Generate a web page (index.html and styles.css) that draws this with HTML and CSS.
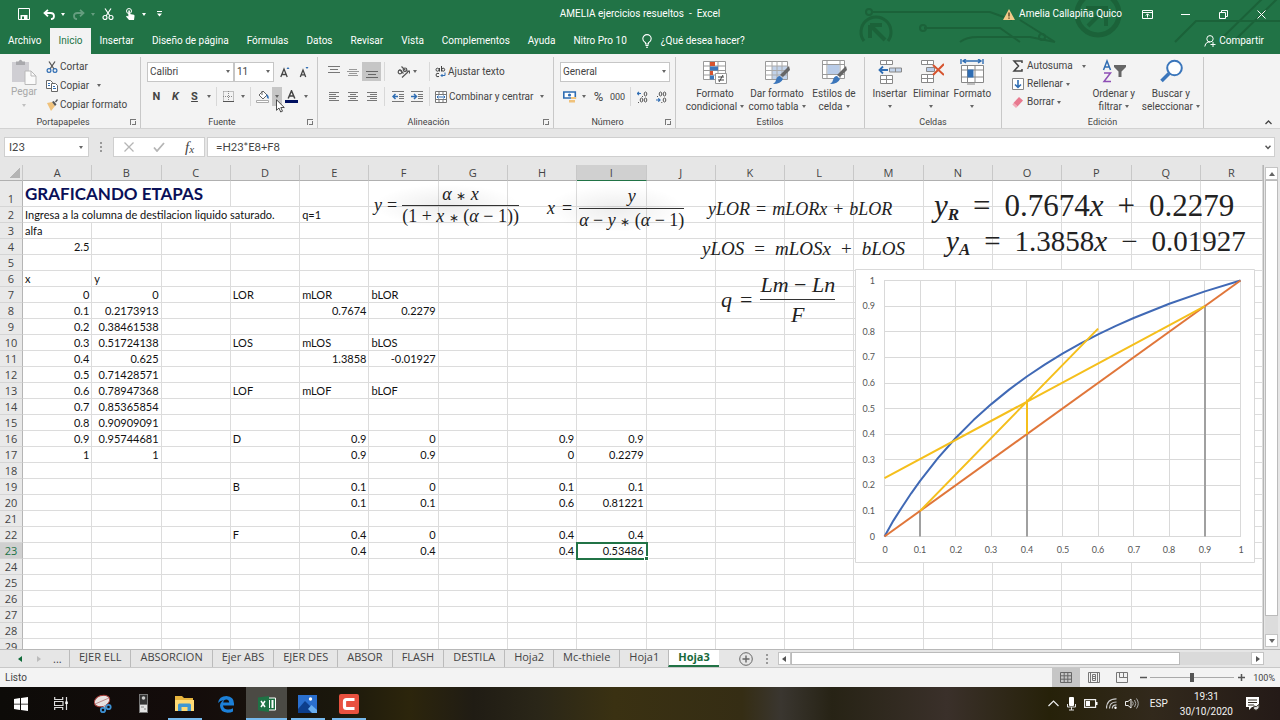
FILE: index.html
```html
<!DOCTYPE html>
<html lang="es">
<head>
<meta charset="utf-8">
<title>AMELIA ejercicios resueltos - Excel</title>
<link rel="stylesheet" href="styles.css">
</head>
<body>
<header class="top">
  <svg class="circuit" width="440" height="54" viewBox="0 0 440 54" aria-hidden="true">
    <g fill="none" stroke="#1b6239" stroke-width="2">
      <path d="M33 12H150L172 20M84 28H160L180 42M120 42Q126 37 138 37H190L215 42M180 20L215 42M335 42L356 21H440M380 40L425 -4M395 40L440 -4"/>
      <circle cx="29" cy="12" r="3"/><circle cx="83" cy="28" r="3"/><circle cx="202" cy="37" r="3"/>
      <path d="M24 41A15 15 0 1 1 48 41" stroke-width="3"/><path d="M30 25H42M30 25V38M31 26L45 40" stroke-width="4"/>
      <circle cx="258" cy="14" r="21" stroke-width="5"/><path d="M246 8H266V26M264 10L248 26" stroke-width="4"/>
    </g>
  </svg>
  <div class="titlebar">
    <div class="qat">
      <button class="q q-save" aria-label="Guardar"><svg width="12" height="12" viewBox="0 0 12 12"><path d="M.5.5h11v11h-11z" fill="none" stroke="#fff"/><path d="M2.500 7h7v5h-7z" fill="#fff"/><path d="M4 8.500h2v2.500H4z" fill="#217346"/><path d="M2.500 1h7v4h-7z" fill="#217346"/></svg></button>
      <button class="q q-undo" aria-label="Deshacer"><svg width="12" height="11" viewBox="0 0 12 11"><path d="M5 .8L1.500 4 5 7.300M2 4h5.500q3.500 0 3.500 3t-3 3.200" fill="none" stroke="#fff" stroke-width="1.800"/></svg><i class="car"></i></button>
      <button class="q q-redo" aria-label="Rehacer"><svg width="12" height="11" viewBox="0 0 12 11"><path d="M7 .8L10.500 4 7 7.300M10 4H4.500Q1 4 1 7t3 3.200" fill="none" stroke="#fff" stroke-width="1.800"/></svg><i class="car"></i></button>
      <button class="q q-cut" aria-label="Cortar"><svg width="12" height="12" viewBox="0 0 12 12"><g fill="none" stroke="#fff" stroke-width="1.200"><path d="M3 .5L8 8M9 .5L4 8"/><circle cx="3" cy="9.500" r="2"/><circle cx="9" cy="9.500" r="2"/></g></svg></button>
      <button class="q q-touch" aria-label="Modo táctil"><svg width="11" height="12" viewBox="0 0 11 12"><circle cx="4" cy="3" r="2.500" fill="none" stroke="#fff"/><path d="M3.300 3a.8.8 0 0 1 1.600 0v3l4 .8q.8.300.6 1.500L9 12H4L1 8.500l1-.8 1.300.8z" fill="#fff"/></svg><i class="car"></i></button>
      <button class="q q-more" aria-label="Personalizar"><svg width="5" height="6" viewBox="0 0 5 6"><path d="M0 .5h5" stroke="#fff"/><path d="M0 2.500h5L2.500 5.500z" fill="#fff"/></svg></button>
    </div>
    <div class="doc">AMELIA ejercicios resueltos &nbsp;-&nbsp; Excel</div>
    <div class="win">
      <svg width="12" height="11" viewBox="0 0 12 11"><path d="M6 0l6 11H0z" fill="#f3c989"/><path d="M6 3.500v4M6 8.500v1.200" stroke="#4a3a1a" stroke-width="1.300"/></svg>
      <span class="user">Amelia Callapiña Quico</span>
      <button class="w w-rib" aria-label="Opciones de cinta"><svg width="11" height="9" viewBox="0 0 11 9"><path d="M.5.500h10v8H.5zM.5 2.500h10M5.500 7.500v-3.500M3.800 5.500l1.700-1.700 1.700 1.700" fill="none" stroke="#fff"/></svg></button>
      <button class="w" aria-label="Minimizar"><svg width="9" height="9" viewBox="0 0 9 9"><path d="M0 4.500h9" stroke="#fff"/></svg></button>
      <button class="w" aria-label="Restaurar"><svg width="9" height="9" viewBox="0 0 9 9"><path d="M.5 2.500h6v6h-6zM2.500 2V.5h6v6H7" fill="none" stroke="#fff"/></svg></button>
      <button class="w" aria-label="Cerrar"><svg width="9" height="9" viewBox="0 0 9 9"><path d="M.5.500l8 8M8.500.500l-8 8" stroke="#fff"/></svg></button>
    </div>
  </div>
  <nav class="tabs">
    <button>Archivo</button><button class="on">Inicio</button><button>Insertar</button><button>Diseño de página</button><button>Fórmulas</button><button>Datos</button><button>Revisar</button><button>Vista</button><button>Complementos</button><button>Ayuda</button><button>Nitro Pro 10</button>
    <button class="tell"><svg width="10" height="14" viewBox="0 0 10 14"><path d="M3.500 10V8.700Q.8 7.300.8 4.800a4.200 4.200 0 0 1 8.400 0Q9.200 7.300 6.500 8.700V10zM3.500 11.500h3M4 13.200h2" fill="none" stroke="#fff" stroke-width="1.100"/></svg>¿Qué desea hacer?</button>
    <button class="share"><svg width="12" height="12" viewBox="0 0 12 12"><g fill="none" stroke="#fff"><circle cx="6" cy="3.800" r="3.200"/><path d="M.8 11.500Q1 8.200 4 7h2M9 7v5M6.500 9.500h5"/></g></svg>Compartir</button>
  </nav>
</header>

<section class="ribbon">
  <div class="group g-clip">
    <div class="body">
      <button class="paste"><svg width="26" height="26" viewBox="0 0 26 26"><path d="M1 3h17v20H1z" fill="#cfced3"/><path d="M5 6V2.500h2.500Q9.500-1 11.500 2.500H14V6z" fill="#a9a9ad"/><path d="M14 12h6l5 5v8.500H14z" fill="#fafafa" stroke="#b9b9b9"/><path d="M20 12v5h5" fill="none" stroke="#b9b9b9"/></svg><span>Pegar</span><i class="car"></i></button>
      <div class="stack">
        <button><svg width="12" height="12" viewBox="0 0 12 12"><path d="M3 .5L8 8M9 .5L4 8" stroke="#555" stroke-width="1.300"/><g fill="none" stroke="#2f6db3" stroke-width="1.200"><circle cx="3" cy="9.500" r="1.900"/><circle cx="9" cy="9.500" r="1.900"/></g></svg>Cortar</button>
        <button><svg width="12" height="12" viewBox="0 0 12 12"><g fill="#fff" stroke="#666"><path d="M.5.500h4l2 2v6h-6z"/><path d="M5.500 3.500h4l2 2v6h-6z"/></g><path d="M2 3.500h2M2 5.500h2M7 6.500h2M7 8.500h3" stroke="#2f6db3"/></svg>Copiar<i class="car far"></i></button>
        <button><svg width="12" height="12" viewBox="0 0 12 12"><path d="M1 4l5-1 3 4-4 5z" fill="#f0c27b"/><path d="M6 3l3 4 1.500-1.500L7.800 2zM9 2.500L11 0l1 1-2 2.500z" fill="#555"/></svg>Copiar formato</button>
      </div>
    </div>
    <footer class="has-launch">Portapapeles<i class="launch"></i></footer>
  </div>

  <div class="group g-font">
    <div class="body rows">
      <div class="row">
        <span class="sel s-font"><select aria-label="Fuente"><option>Calibri</option></select><i class="car"></i></span>
        <span class="sel s-size"><select aria-label="Tamaño"><option>11</option></select><i class="car"></i></span>
        <button class="ic" aria-label="Aumentar fuente"><svg width="10" height="12" viewBox="0 0 10 12"><path d="M.8 11L4 3l3.200 8M2 8.500h4" fill="none" stroke="#444" stroke-width="1.300"/><path d="M6.500 3l1.500-2 1.500 2z" fill="#2f6db3"/></svg></button>
        <button class="ic" aria-label="Disminuir fuente"><svg width="10" height="12" viewBox="0 0 10 12"><path d="M1.300 11L4 4l2.700 7M2.200 8.800h3.600" fill="none" stroke="#444" stroke-width="1.300"/><path d="M6.500 1l1.500 2 1.500-2z" fill="#2f6db3"/></svg></button>
      </div>
      <div class="row">
        <button class="ic fmt"><b>N</b></button><button class="ic fmt"><b><em>K</em></b></button><button class="ic fmt"><b><u>S</u></b></button><button class="cb" aria-label="Más subrayado"><i class="car"></i></button>
        <i class="sep"></i>
        <button class="ic" aria-label="Bordes"><svg width="11" height="11" viewBox="0 0 11 11"><path d="M.5.500h10v10M.5.500v10M5.500 0v10M0 5.500h10" fill="none" stroke="#8a8a8a" stroke-dasharray="1 1"/><path d="M0 10.500h11" stroke="#555"/></svg></button><button class="cb" aria-label="Más bordes"><i class="car"></i></button>
        <i class="sep"></i>
        <button class="ic" aria-label="Color de relleno"><svg width="14" height="13" viewBox="0 0 14 13"><path d="M3 5l4-4 4 4-4 4z" fill="#fff" stroke="#666"/><path d="M6 5V1" stroke="#666"/><path d="M10.500 4q3 2 2 5-1.500-.5-2-3z" fill="#2f6db3"/><path d="M.5 10.500h12v2H.5z" fill="#fff" stroke="#aaa"/></svg></button><button class="cb hot" aria-label="Más rellenos"><i class="car"></i></button>
        <button class="ic" aria-label="Color de fuente"><svg width="13" height="13" viewBox="0 0 13 13"><path d="M3.200 8.500L6.500.800l3.300 7.700M4.300 6h4.400" fill="none" stroke="#444" stroke-width="1.500"/><path d="M0 10h13v3H0z" fill="#001060"/></svg></button><button class="cb" aria-label="Más colores"><i class="car"></i></button>
      </div>
    </div>
    <footer class="has-launch">Fuente<i class="launch"></i></footer>
  </div>

  <div class="group g-align">
    <div class="body rows">
      <div class="row">
        <button class="ic" aria-label="Alinear arriba"><svg width="12" height="12" viewBox="0 0 12 12"><path d="M0 .5h12M2 3.500h8M0 6.500h12" stroke="#777"/></svg></button>
        <button class="ic" aria-label="Alinear al medio"><svg width="12" height="12" viewBox="0 0 12 12"><path d="M2 3.500h8M0 5.500h12M2 7.500h8M1 9.500h10" stroke="#999"/></svg></button>
        <button class="ic hot" aria-label="Alinear abajo"><svg width="12" height="12" viewBox="0 0 12 12"><path d="M0 5.500h12M2 8.500h8M0 11.500h12" stroke="#666"/></svg></button>
        <i class="sep"></i>
        <button class="ic wide" aria-label="Orientación"><svg width="13" height="12" viewBox="0 0 13 12"><g fill="none" stroke="#555" stroke-width="1.200"><circle cx="3" cy="6" r="1.800"/><path d="M2.500 3.500l4 4M4.500.500l4 4"/><circle cx="8" cy="3.800" r="1.800"/><path d="M5 11.500L12 5M12.500 7.500V5H10"/></g></svg><i class="car"></i></button>
        <i class="sep"></i>
        <button class="tx"><svg width="11" height="12" viewBox="0 0 11 12"><g fill="none" stroke="#444"><circle cx="2.500" cy="3.700" r="1.500"/><path d="M4.500 2v3.500M6.500 0v5.500M4 7.500Q1 6.500 1 9t3 1.500"/><circle cx="8.200" cy="3.700" r="1.500"/></g><path d="M10 6.500v3H6M7.500 8L6 9.500 7.500 11" fill="none" stroke="#2f6db3"/></svg>Ajustar texto</button>
      </div>
      <div class="row">
        <button class="ic" aria-label="Alinear a la izquierda"><svg width="10" height="9" viewBox="0 0 10 9"><path d="M0 .5h10M0 2.500h7M0 4.500h10M0 6.500h7M0 8.500h10" stroke="#777"/></svg></button>
        <button class="ic" aria-label="Centrar"><svg width="10" height="9" viewBox="0 0 10 9"><path d="M0 .5h10M2 2.500h6M0 4.500h10M2 6.500h6M0 8.500h10" stroke="#777"/></svg></button>
        <button class="ic" aria-label="Alinear a la derecha"><svg width="10" height="9" viewBox="0 0 10 9"><path d="M0 .5h10M3 2.500h7M0 4.500h10M3 6.500h7M0 8.500h10" stroke="#777"/></svg></button>
        <i class="sep"></i>
        <button class="ic" aria-label="Disminuir sangría"><svg width="12" height="11" viewBox="0 0 12 11"><path d="M0 .5h12M7 3.500h5M7 5.500h5M7 7.500h5M0 10.500h12" stroke="#777"/><path d="M6 5.500H1M3.500 3L1 5.500 3.500 8" fill="none" stroke="#2f6db3" stroke-width="1.500"/></svg></button>
        <button class="ic" aria-label="Aumentar sangría"><svg width="12" height="11" viewBox="0 0 12 11"><path d="M0 .5h12M7 3.500h5M7 5.500h5M7 7.500h5M0 10.500h12" stroke="#777"/><path d="M0 5.500h5M3 3l2.500 2.500L3 8" fill="none" stroke="#2f6db3" stroke-width="1.500"/></svg></button>
        <i class="sep"></i>
        <button class="tx"><svg width="12" height="12" viewBox="0 0 12 12"><path d="M.5.500h11v11H.5zM0 3.500h12M0 8.500h12M4 0v3M8 0v3M4 9v3M8 9v3" fill="#fff" stroke="#777"/><path d="M2 6h8M3.500 4.500L2 6l1.500 1.500M8.500 4.500L10 6 8.500 7.500" fill="none" stroke="#2f6db3"/></svg>Combinar y centrar<i class="car far"></i></button>
      </div>
    </div>
    <footer class="has-launch">Alineación<i class="launch"></i></footer>
  </div>

  <div class="group g-num">
    <div class="body rows">
      <div class="row"><span class="sel s-num"><select aria-label="Formato de número"><option>General</option></select><i class="car"></i></span></div>
      <div class="row">
        <button class="ic" aria-label="Moneda"><svg width="14" height="12" viewBox="0 0 14 12"><path d="M.8 1h11.500v6H.8z" fill="#fff" stroke="#2f6db3" stroke-width="1.600"/><circle cx="6.500" cy="4" r="1.600" fill="#2f6db3"/><path d="M8 6h5v2H8zM6 9h6v2.500H6z" fill="#f0c27b"/></svg></button><button class="cb" aria-label="Más monedas"><i class="car"></i></button>
        <button class="ic pct">%</button><button class="ic mil">000</button>
        <i class="sep"></i>
        <button class="ic dec" aria-label="Aumentar decimales"><svg width="11" height="12" viewBox="0 0 11 12"><path d="M0 2.500h4M2 .8L.3 2.500 2 4.200" fill="none" stroke="#2f6db3" stroke-width="1.200"/><g fill="none" stroke="#555"><ellipse cx="8.500" cy="3" rx="1.300" ry="2"/><ellipse cx="4.500" cy="9" rx="1.300" ry="2"/><ellipse cx="8.500" cy="9" rx="1.300" ry="2"/></g><path d="M5.500 5v1M1.500 11v1" stroke="#555"/></svg></button>
        <button class="ic dec" aria-label="Disminuir decimales"><svg width="11" height="12" viewBox="0 0 11 12"><path d="M0 9h4M2.300 7.300L4 9l-1.700 1.700" fill="none" stroke="#2f6db3" stroke-width="1.200"/><g fill="none" stroke="#555"><ellipse cx="4.500" cy="3" rx="1.300" ry="2"/><ellipse cx="8.500" cy="3" rx="1.300" ry="2"/><ellipse cx="8.500" cy="9" rx="1.300" ry="2"/></g><path d="M1.500 5v1M5.800 11v1" stroke="#555"/></svg></button>
      </div>
    </div>
    <footer class="has-launch">Número<i class="launch"></i></footer>
  </div>

  <div class="group g-style">
    <div class="body bigs">
      <button class="big"><svg width="26" height="26" viewBox="0 0 26 26"><path d="M1.500 2.500h22v18h-22zM1.500 7h22M1.500 11.500h22M1.500 16h22M8 2.500v18M16 2.500v18" fill="#fff" stroke="#999"/><path d="M8 3h5v4H8zM8 12h3v4H8z" fill="#d6532e"/><path d="M8 7.500h8v4H8zM8 16.500h4v4H8z" fill="#3b76bb"/><path d="M13.500 14.500h11v10h-11z" fill="#fff" stroke="#999"/><path d="M16 18h6M16 21h6M21 16l-4 7" stroke="#444"/></svg>Formato<span>condicional<i class="car"></i></span></button>
      <button class="big"><svg width="26" height="26" viewBox="0 0 26 26"><path d="M1.500 2.500h22v18h-22z" fill="#fff" stroke="#999"/><path d="M8 7h15v13H8z" fill="#c2d3ea"/><path d="M1.500 7h22M1.500 11.500h22M1.500 16h22M8 2.500v18M13 2.500v18M18 2.500v18" stroke="#aaa"/><path d="M25 7l1 4-7 7-3-2z" fill="#666"/><path d="M16 17l3 3q-2 5-10 5 3-2 3-4 1-4 4-4z" fill="#3b76bb"/></svg>Dar formato<span>como tabla<i class="car"></i></span></button>
      <button class="big"><svg width="26" height="26" viewBox="0 0 26 26"><path d="M1.500 1.500h22v18h-22zM1.500 5.500h22M1.500 15.500h22M6 1.500v18M19 1.500v18" fill="#fff" stroke="#999"/><path d="M6.500 6h12v9h-12z" fill="#b9cce8"/><path d="M25 7l1 4-7 7-3-2z" fill="#666"/><path d="M16 17l3 3q-2 5-10 5 3-2 3-4 1-4 4-4z" fill="#3b76bb"/></svg>Estilos de<span>celda<i class="car"></i></span></button>
    </div>
    <footer>Estilos</footer>
  </div>

  <div class="group g-cells">
    <div class="body bigs">
      <button class="big"><svg width="26" height="26" viewBox="0 0 26 26"><path d="M3.500 1.500h12v4h-12zM9.500 1.500v4M3.500 16.500h12v8h-12zM9.500 16.500v8M3.500 20.500h12" fill="#fff" stroke="#888"/><path d="M12.500 9h12v4h-12zM18.500 9v4" fill="#c2d3ea" stroke="#888"/><path d="M11 11H2.500M6 7.500L2.500 11 6 14.500" fill="none" stroke="#2f6db3" stroke-width="1.800"/></svg>Insertar<span><i class="car"></i></span></button>
      <button class="big"><svg width="26" height="26" viewBox="0 0 26 26"><path d="M3.500 1.500h12v4h-12zM9.500 1.500v4M3.500 15.500h12v8h-12zM9.500 15.500v8M3.500 19.500h12" fill="#fff" stroke="#888"/><path d="M8.500 8.500h8v4h-8z" fill="#b9cce8" stroke="#888"/><path d="M15 6l11 10M26 5L15 16" stroke="#d6532e" stroke-width="2"/></svg>Eliminar<span><i class="car"></i></span></button>
      <button class="big"><svg width="26" height="26" viewBox="0 0 26 26"><path d="M4 2h18M7 0L4 2l3 2M19 0l3 2-3 2M2 0v5M24 0v5" fill="none" stroke="#2f6db3" stroke-width="1.400"/><path d="M2.500 6.500h22v17h-22zM2.500 11h22M2.500 18h22M8.500 6.500v17M16 6.500v17" fill="#fff" stroke="#888"/><path d="M8.500 10.500h6v8h-6z" fill="#2f6db3"/><path d="M8 25h8" stroke="#888"/></svg>Formato<span><i class="car"></i></span></button>
    </div>
    <footer>Celdas</footer>
  </div>

  <div class="group g-edit">
    <div class="body bigs">
      <div class="stack">
        <button><svg width="12" height="12" viewBox="0 0 12 12"><path d="M10 3V1H2l4.500 5L2 11h8V9" fill="none" stroke="#444" stroke-width="1.500"/></svg>Autosuma<i class="car far"></i></button>
        <button><svg width="12" height="12" viewBox="0 0 12 12"><path d="M.5.500h11v11H.5z" fill="#fff" stroke="#888"/><path d="M6 2v7M3 6.500L6 9.300l3-2.800" fill="none" stroke="#2f6db3" stroke-width="1.600"/></svg>Rellenar<i class="car"></i></button>
        <button><svg width="12" height="12" viewBox="0 0 12 12"><path d="M7 1l4 3.500-5.500 6L1.500 7z" fill="#e8798f"/><path d="M1.500 7l4 3.500L4 12 .3 8.500z" fill="#f3aab8"/></svg>Borrar<i class="car"></i></button>
      </div>
      <button class="big"><svg width="26" height="26" viewBox="0 0 26 26"><path d="M2.500 11L6 2l3.500 9M3.700 8h4.600" fill="none" stroke="#2f6db3" stroke-width="1.500"/><path d="M3 14h6.500L3 22.500h7" fill="none" stroke="#8e4fb5" stroke-width="1.500"/><path d="M13 6h12v2l-4.500 4.500V18h-3v-5.500L13 8z" fill="#666"/></svg>Ordenar y<span>filtrar<i class="car"></i></span></button>
      <button class="big"><svg width="26" height="26" viewBox="0 0 26 26"><circle cx="16.500" cy="9" r="7.300" fill="#fff" stroke="#3b76bb" stroke-width="2"/><path d="M11 14.500L3.500 22" stroke="#3b76bb" stroke-width="3.500"/></svg>Buscar y<span>seleccionar<i class="car"></i></span></button>
    </div>
    <footer>Edición</footer>
  </div>
  <button class="fold" aria-label="Contraer cinta"><svg width="7" height="5" viewBox="0 0 7 5"><path d="M.5 4l3-3 3 3" fill="none" stroke="#444" stroke-width="1.300"/></svg></button>
</section>

<section class="fbar">
  <div class="namebox"><input aria-label="Cuadro de nombres" value="I23"><i class="car"></i></div>
  <i class="dots"></i>
  <div class="fbtns">
    <button aria-label="Cancelar"><svg width="10" height="10" viewBox="0 0 10 10"><path d="M.5.500l9 9M9.500.500l-9 9" stroke="#b5b5b5" stroke-width="1.300"/></svg></button>
    <button aria-label="Introducir"><svg width="12" height="10" viewBox="0 0 12 10"><path d="M1 5.500L4 9l7-8" fill="none" stroke="#b5b5b5" stroke-width="1.800"/></svg></button>
    <button class="fx">f<small>x</small></button>
  </div>
  <div class="finput"><input aria-label="Barra de fórmulas" value="=H23*E8+F8"><svg width="6" height="5" viewBox="0 0 6 5"><path d="M.5.800L3 3.500 5.500.800" fill="none" stroke="#555" stroke-width="1.500"/></svg></div>
</section>

<main class="sheet">
  <div class="canvas">
    <table class="grid">
      <colgroup><col class="c-head"><col span="17"><col class="c-last"></colgroup>
      <thead><tr><th class="corner"><th>A<th>B<th>C<th>D<th>E<th>F<th>G<th>H<th class="act">I<th>J<th>K<th>L<th>M<th>N<th>O<th>P<th>Q<th>R</thead>
      <tbody>
      <tr class="first"><th>1<td colspan="3" class="big-title">GRAFICANDO ETAPAS<td><td><td><td><td><td><td><td><td><td><td><td><td><td><td>
      <tr><th>2<td colspan="4">Ingresa a la columna de destilacion liquido saturado.<td>q=1<td><td><td><td><td><td><td><td><td><td><td><td><td>
      <tr><th>3<td>alfa<td><td><td><td><td><td><td><td><td><td><td><td><td><td><td><td><td>
      <tr><th>4<td class="n">2.5<td><td><td><td><td><td><td><td><td><td><td><td><td><td><td><td><td>
      <tr><th>5<td><td><td><td><td><td><td><td><td><td><td><td><td><td><td><td><td><td>
      <tr><th>6<td>x<td>y<td><td><td><td><td><td><td><td><td><td><td><td><td><td><td><td>
      <tr><th>7<td class="n">0<td class="n">0<td><td>LOR<td>mLOR<td>bLOR<td><td><td><td><td><td><td><td><td><td><td><td>
      <tr><th>8<td class="n">0.1<td class="n">0.2173913<td><td><td class="n">0.7674<td class="n">0.2279<td><td><td><td><td><td><td><td><td><td><td><td>
      <tr><th>9<td class="n">0.2<td class="n">0.38461538<td><td><td><td><td><td><td><td><td><td><td><td><td><td><td><td>
      <tr><th>10<td class="n">0.3<td class="n">0.51724138<td><td>LOS<td>mLOS<td>bLOS<td><td><td><td><td><td><td><td><td><td><td><td>
      <tr><th>11<td class="n">0.4<td class="n">0.625<td><td><td class="n">1.3858<td class="n">-0.01927<td><td><td><td><td><td><td><td><td><td><td><td>
      <tr><th>12<td class="n">0.5<td class="n">0.71428571<td><td><td><td><td><td><td><td><td><td><td><td><td><td><td><td>
      <tr><th>13<td class="n">0.6<td class="n">0.78947368<td><td>LOF<td>mLOF<td>bLOF<td><td><td><td><td><td><td><td><td><td><td><td>
      <tr><th>14<td class="n">0.7<td class="n">0.85365854<td><td><td><td><td><td><td><td><td><td><td><td><td><td><td><td>
      <tr><th>15<td class="n">0.8<td class="n">0.90909091<td><td><td><td><td><td><td><td><td><td><td><td><td><td><td><td>
      <tr><th>16<td class="n">0.9<td class="n">0.95744681<td><td>D<td class="n">0.9<td class="n">0<td><td class="n">0.9<td class="n">0.9<td><td><td><td><td><td><td><td><td>
      <tr><th>17<td class="n">1<td class="n">1<td><td><td class="n">0.9<td class="n">0.9<td><td class="n">0<td class="n">0.2279<td><td><td><td><td><td><td><td><td>
      <tr><th>18<td><td><td><td><td><td><td><td><td><td><td><td><td><td><td><td><td><td>
      <tr><th>19<td><td><td><td>B<td class="n">0.1<td class="n">0<td><td class="n">0.1<td class="n">0.1<td><td><td><td><td><td><td><td><td>
      <tr><th>20<td><td><td><td><td class="n">0.1<td class="n">0.1<td><td class="n">0.6<td class="n">0.81221<td><td><td><td><td><td><td><td><td>
      <tr><th>21<td><td><td><td><td><td><td><td><td><td><td><td><td><td><td><td><td><td>
      <tr><th>22<td><td><td><td>F<td class="n">0.4<td class="n">0<td><td class="n">0.4<td class="n">0.4<td><td><td><td><td><td><td><td><td>
      <tr><th class="act">23<td><td><td><td><td class="n">0.4<td class="n">0.4<td><td class="n">0.4<td class="n cur">0.53486<td><td><td><td><td><td><td><td><td>
      <tr><th>24<td><td><td><td><td><td><td><td><td><td><td><td><td><td><td><td><td><td>
      <tr><th>25<td><td><td><td><td><td><td><td><td><td><td><td><td><td><td><td><td><td>
      <tr><th>26<td><td><td><td><td><td><td><td><td><td><td><td><td><td><td><td><td><td>
      <tr><th>27<td><td><td><td><td><td><td><td><td><td><td><td><td><td><td><td><td><td>
      <tr><th>28<td><td><td><td><td><td><td><td><td><td><td><td><td><td><td><td><td><td>
      <tr><th>29<td><td><td><td><td><td><td><td><td><td><td><td><td><td><td><td><td><td>
      </tbody>
    </table>

    <div class="eq eq-y"><i>y</i><span>=</span><span class="frac"><span><i>α</i> <small>∗</small> <i>x</i></span><span>(1 + <i>x</i> <small>∗</small> (<i>α</i> − 1))</span></span></div>
    <div class="eq eq-x"><i>x</i><span>=</span><span class="frac"><span><i>y</i></span><span><i>α</i> − <i>y</i> <small>∗</small> (<i>α</i> − 1)</span></span></div>
    <div class="eq eq-lor"><i>yLOR</i><span>=</span><i>mLORx</i><span>+</span><i>bLOR</i></div>
    <div class="eq eq-los"><i>yLOS</i><span>=</span><i>mLOSx</i><span>+</span><i>bLOS</i></div>
    <div class="eq eq-q"><i>q</i><span>=</span><span class="frac"><span><i>Lm</i> − <i>Ln</i></span><span><i>F</i></span></span></div>
    <div class="eq eq-r"><span><i>y</i><sub>R</sub></span><span>=</span><span>0.7674<i>x</i></span><span>+</span><span>0.2279</span></div>
    <div class="eq eq-a"><span><i>y</i><sub>A</sub></span><span>=</span><span>1.3858<i>x</i></span><span>−</span><span>0.01927</span></div>

    <svg class="chart" width="400" height="294" viewBox="0 0 400 294" role="img" aria-label="Gráfico de etapas">
      <path d="M.5.500h399v293H.5z" fill="#fff" stroke="#d9d9d9"/>
      <path d="M29.500 11.500H385.500M29.500 37.500H385.500M29.500 62.500H385.500M29.500 88.500H385.500M29.500 114.500H385.500M29.500 139.500H385.500M29.500 165.500H385.500M29.500 190.500H385.500M29.500 216.500H385.500M29.500 241.500H385.500M29.500 267.500H385.500M29.500 11V268M65.500 11V268M100.500 11V268M136.500 11V268M171.500 11V268M207.500 11V268M243.500 11V268M278.500 11V268M314.500 11V268M349.500 11V268M385.500 11V268" stroke="#d9d9d9" fill="none"/>
      <g fill="none" stroke-width="2" stroke-linejoin="round">
        <path stroke="#a0a0a0" d="M350 37.100V267.500M65 241.900V267.500M172 165.100V267.500"/>
        <path stroke="#4069b5" d="M29.500 267.500L38.400 251.600 47.300 237.700 56.200 224.300 65.100 211.800 82.900 189.100 100.700 169 118.500 151.100 136.300 135.100 154.100 120.600 171.900 107.500 189.700 95.600 207.500 84.600 225.300 74.600 243.100 65.400 260.900 56.900 278.700 49 314.300 34.800 349.900 22.400 385.500 11.500"/>
        <path stroke="#e0763a" d="M29.500 267.500L385.500 11.500"/>
        <path stroke="#f5bf1c" d="M29.500 209.200L349.900 37.100M65.100 241.900L243.100 59.600M172 165.100V130.600"/>
      </g>
      <g class="lab end"><text x="20" y="15">1</text><text x="20" y="40">0.9</text><text x="20" y="66">0.8</text><text x="20" y="91">0.7</text><text x="20" y="117">0.6</text><text x="20" y="143">0.5</text><text x="20" y="168">0.4</text><text x="20" y="194">0.3</text><text x="20" y="219">0.2</text><text x="20" y="245">0.1</text><text x="20" y="271">0</text></g>
      <g class="lab mid"><text x="30" y="284">0</text><text x="65" y="284">0.1</text><text x="101" y="284">0.2</text><text x="136" y="284">0.3</text><text x="172" y="284">0.4</text><text x="208" y="284">0.5</text><text x="243" y="284">0.6</text><text x="279" y="284">0.7</text><text x="314" y="284">0.8</text><text x="350" y="284">0.9</text><text x="386" y="284">1</text></g>
    </svg>
  </div>
  <div class="vscroll"><button class="sb" aria-label="Arriba"><i class="tri up"></i></button><div class="vthumb"></div><div class="vrest"></div><button class="sb" aria-label="Abajo"><i class="tri down"></i></button></div>
</main>

<section class="sheets">
  <div class="snav"><i class="tri left go"></i><i class="tri right off"></i><span>...</span></div>
  <nav><button>EJER ELL</button><button>ABSORCION</button><button>Ejer ABS</button><button>EJER DES</button><button>ABSOR</button><button>FLASH</button><button>DESTILA</button><button>Hoja2</button><button>Mc-thiele</button><button>Hoja1</button><button class="on">Hoja3</button></nav>
  <button class="add" aria-label="Hoja nueva"><svg width="14" height="14" viewBox="0 0 14 14"><g fill="none" stroke="#666"><circle cx="7" cy="7" r="6.300"/><path d="M7 3.500v7M3.500 7h7" stroke-width="1.400"/></g></svg></button>
  <i class="dots"></i>
  <div class="hscroll"><button class="sb" aria-label="Izquierda"><i class="tri left"></i></button><div class="hthumb"></div><div class="hrest"></div><button class="sb" aria-label="Derecha"><i class="tri right"></i></button></div>
</section>

<section class="status">
  <span>Listo</span>
  <div class="views">
    <button class="hot" aria-label="Normal"><svg width="12" height="11" viewBox="0 0 12 11"><path d="M.5.500h11v10H.5zM0 3.800h12M0 7.200h12M4.200 0v11M7.800 0v11" fill="none" stroke="#666"/></svg></button>
    <button aria-label="Diseño de página"><svg width="12" height="11" viewBox="0 0 12 11"><path d="M.5.500h11v10H.5zM2.500.500v10M9.500.500v10M4.500 2.500h3v6h-3zM4 4.500h4M4 6.500h4" fill="none" stroke="#777"/></svg></button>
    <button aria-label="Vista previa de salto"><svg width="12" height="11" viewBox="0 0 12 11"><path d="M.5.500h11v10H.5zM3.500.500v5h8M7.500.500v5" fill="none" stroke="#777"/></svg></button>
  </div>
  <button class="z" aria-label="Alejar"><svg width="7" height="7" viewBox="0 0 7 7"><path d="M0 3.500h7" stroke="#555" stroke-width="1.500"/></svg></button>
  <input type="range" aria-label="Zoom" min="0" max="200" value="100">
  <button class="z" aria-label="Acercar"><svg width="7" height="7" viewBox="0 0 7 7"><path d="M0 3.500h7M3.500 0v7" stroke="#555" stroke-width="1.500"/></svg></button>
  <span class="pc">100%</span>
</section>

<footer class="taskbar">
  <button class="app" aria-label="Inicio"><svg width="14" height="14" viewBox="0 0 14 14"><path d="M0 2l6-.9v5.600H0zM7 1l7-1v6.700H7zM0 7.500h6V13l-6-.9zM7 7.500h7V14l-7-1z" fill="#fff"/></svg></button>
  <button class="app" aria-label="Vista de tareas"><svg width="15" height="13" viewBox="0 0 15 13"><path d="M.7 0v2.500h8V0M.7 13v-2.500h8V13M.5 4.500h8.500v4H.5zM12.500 0v13" fill="none" stroke="#ddd" stroke-width="1.200"/><path d="M11.300 4.500h2.500v2.500h-2.500z" fill="#fff"/></svg></button>
  <button class="app" aria-label="Recortes"><svg width="20" height="20" viewBox="0 0 20 20"><ellipse cx="9" cy="7" rx="8" ry="5.500" transform="rotate(-20 9 7)" fill="#e9e3e1" stroke="#a33a35"/><path d="M2 10l14-6" stroke="#b88" /><path d="M9 9l3 5M12 8l0 7" stroke="#ddd"/><g fill="none" stroke="#3c8fd0" stroke-width="1.800"><circle cx="10" cy="16" r="2.200"/><circle cx="15.500" cy="13" r="2.200"/></g></svg></button>
  <button class="app" aria-label="Dispositivo"><svg width="9" height="19" viewBox="0 0 9 19"><path d="M0 0h9v19H0z" fill="#777"/><path d="M1 1h7v9H1z" fill="#333"/><circle cx="4.500" cy="4" r="1.800" fill="#ccc"/><path d="M1 11h7v7H1z" fill="#e3e3e3"/><path d="M2 13h3M5 15h2" stroke="#888"/></svg></button>
  <button class="app open" aria-label="Explorador"><svg width="19" height="17" viewBox="0 0 19 17"><path d="M0 1h7l2 2h9v13H0z" fill="#e8b53f"/><path d="M0 5h19v11H0z" fill="#ffda75"/><path d="M3 16V10q0-1.500 1.500-1.500h10Q16 8.500 16 10v6h-3.500v-4h-6v4z" fill="#3f97d3"/></svg></button>
  <button class="app" aria-label="Edge"><svg width="18" height="18" viewBox="0 0 18 18"><path d="M1 8Q2 1 9.500 1 17 1.500 17 8.500V10.500H6Q6.500 14.500 11 14.500q3 0 5-1.300v3.300Q14 17.700 10.500 17.700 3 17.300 3 10.500 3.300 7 7 5 3 5.300 1 8zM6.200 7.500h6Q12 4.500 9.300 4.500T6.200 7.500z" fill="#1c80d8"/></svg></button>
  <button class="app open current" aria-label="Excel"><svg width="18" height="16" viewBox="0 0 18 16"><path d="M8 2h9.500v12H8z" fill="#1b6e40" stroke="#fff"/><path d="M10 4h2v8h-2zM13.500 4h2v8h-2z" fill="#fff"/><path d="M0 1.500L11 0v16L0 14.500z" fill="#1f7245"/><path d="M3 5l4 6M7 5l-4 6" stroke="#fff" stroke-width="1.500"/></svg></button>
  <button class="app open" aria-label="Fotos"><svg width="19" height="18" viewBox="0 0 19 18"><path d="M0 0h19v18H0z" fill="#2a6fce"/><path d="M0 14l7-8 12 12H0z" fill="#0d3f8c"/><path d="M10 14l3.500-4 5.500 5v3h-5z" fill="#68aef0"/><circle cx="12.500" cy="4" r="1.700" fill="#fff"/></svg></button>
  <button class="app open" aria-label="Camtasia"><svg width="20" height="20" viewBox="0 0 20 20"><rect width="20" height="20" rx="2" fill="#e8513f"/><path d="M15.500 5.500H7.500Q5.500 5.500 5.500 7.500v5q0 2 2 2h8" fill="none" stroke="#fff" stroke-width="3.200"/></svg></button>
  <div class="tray">
    <svg width="11" height="7" viewBox="0 0 11 7"><path d="M.5 6l5-5 5 5" fill="none" stroke="#eee" stroke-width="1.200"/></svg>
    <svg width="9" height="14" viewBox="0 0 9 14"><rect x="2" width="5" height="9" rx="1" fill="#fff"/><path d="M.5 7v3h8V7M4.500 10v3M2 13h5" fill="none" stroke="#ddd"/></svg>
    <svg width="14" height="9" viewBox="0 0 14 9"><path d="M.6.600h11v7.800h-11z" fill="none" stroke="#eee" stroke-width="1.200"/><path d="M2 2h4v5H2zM12 3h1.500v3H12z" fill="#fff"/></svg>
    <svg width="11" height="11" viewBox="0 0 11 11"><g fill="none" stroke="#ccc" stroke-width="1.200"><path d="M.5 10.500Q.5.800 10.500.800M3.500 10.500q0-6.500 7-6.500M6.300 10.500q0-3.700 4.200-3.700"/></g><circle cx="9.500" cy="9.700" r="1.200" fill="#fff"/></svg>
    <svg width="14" height="11" viewBox="0 0 14 11"><path d="M.5 3.500h2.500L6 1v9L3 7.500H.5z" fill="none" stroke="#eee"/><path d="M7.500 3.500q1.500 2 0 4M9.500 2q2.500 3.500 0 7M11.500.500q3.500 5 0 10" fill="none" stroke="#aaa"/></svg>
    <span class="lang">ESP</span>
    <span class="clock"><span>19:31</span><span>30/10/2020</span></span>
    <svg width="15" height="14" viewBox="0 0 15 14"><path d="M0 0h13v10H6l-3 3v-3H0z" fill="#fff"/><path d="M2 3h9M2 5.500h9M2 8h6" stroke="#332c22"/><path d="M8 9q2 2 5-1.500 1 4-2 5.500-2 .5-3.500-1z" fill="#ddd" stroke="#332c22"/></svg>
  </div>
</footer>
<svg class="cursor" width="9" height="14" viewBox="0 0 9 14" aria-hidden="true"><path d="M.5.800v10.500L3 9l1.700 4 1.800-.8L4.800 8.500h3.500z" fill="#fff" stroke="#222" stroke-width=".8"/></svg>
</body>
</html>
```

FILE: styles.css
```css
* { box-sizing: border-box; }
body {
  margin: 0; height: 100vh; overflow: hidden;
  display: flex; flex-direction: column;
  font: 10px/12px Roboto, "Open Sans", sans-serif; color: #444; background: #e6e6e6;
}
button { font: inherit; color: inherit; background: none; border: 0; margin: 0; padding: 0; display: inline-flex; align-items: center; justify-content: center; white-space: nowrap; }
input, select { font: inherit; color: inherit; border: 0; background: none; padding: 0; margin: 0; min-width: 0; outline: 0; }
select { appearance: none; flex: 1; }
svg { flex: none; }
.car { border: 2px solid transparent; border-top: 3px solid #666; border-bottom: 0; flex: none; }
.dots { width: 2px; height: 10px; background: repeating-linear-gradient(#999 0 2px, transparent 2px 4px); flex: none; }
.hot { background: #c6c6c6; }

/* title bar and tabs */
.top { position: relative; flex: none; background: #217346; color: #fff; }
.circuit { position: absolute; right: 0; top: 0; }
.titlebar { position: relative; height: 28px; display: grid; grid-template-columns: 1fr auto 1fr; align-items: center; }
.qat { display: flex; align-items: center; padding-left: 18px; }
.qat .car { border-top-color: #fff; }
.q { gap: 6px; justify-content: flex-start; }
.q-save { width: 25px; } .q-undo { width: 30px; } .q-redo { width: 29px; opacity: .3; } .q-cut { width: 23px; } .q-touch { width: 32px; }
.win { display: flex; align-items: center; justify-content: flex-end; }
.user { padding: 0 6px 0 4px; }
.w { width: 38px; height: 28px; }
.tabs { position: relative; height: 26px; display: flex; }
.tabs button { padding: 0 9px; }
.tabs button:first-child { padding-left: 8px; }
.tabs .on { background: #f3f3f3; color: #217346; padding: 0 8px; }
.tabs .tell { gap: 9px; padding-left: 6px; }
.tabs .share { margin-left: auto; gap: 3px; padding-right: 16px; }

/* ribbon */
.ribbon { flex: none; height: 75px; display: flex; background: #f3f3f3; border-bottom: 1px solid #d2d2d2; padding-top: 3px; }
.group { display: flex; flex-direction: column; border-right: 1px solid #c8c8c8; flex: 0 1 auto; min-width: 0; }
.g-clip { flex-basis: 141px; } .g-font { flex-basis: 177px; } .g-align { flex-basis: 236px; } .g-num { flex-basis: 122px; }
.g-style { flex-basis: 189px; } .g-cells { flex-basis: 137px; } .g-edit { flex-basis: 202px; }
.group footer { position: relative; height: 12px; text-align: center; font-size: 9px; margin-top: auto; }
.group .has-launch { padding-right: 14px; }
.launch { position: absolute; right: 4px; top: 3px; width: 6px; height: 6px; border: solid #777; border-width: 1px 0 0 1px; }
.launch::after { content: ""; position: absolute; right: 0; bottom: 0; width: 3px; height: 3px; border: solid #777; border-width: 0 1px 1px 0; }
.body { display: flex; }
.paste { flex-direction: column; width: 48px; padding-top: 2px; color: #a8a8a8; justify-content: flex-start; gap: 1px; }
.paste .car { border-top-color: #c0c0c0; margin-top: 5px; }
.stack { display: flex; flex-direction: column; }
.stack button { height: 18px; gap: 3px; justify-content: flex-start; }
.stack .far { margin-left: 6px; }
.g-clip .stack { margin-left: -2px; }
.g-clip .stack button { height: 19px; gap: 2px; }
.rows { flex-direction: column; padding: 5px 0 0 6px; gap: 6px; }
.row { display: flex; align-items: center; height: 19px; }
.sel { display: flex; align-items: center; height: 20px; border: 1px solid #c6c6c6; background: #fff; padding: 0 3px 0 2px; }
.s-font { width: 87px; } .s-size { width: 40px; margin-right: 1px; }
.s-num { width: 110px; }
.ic { width: 19px; height: 19px; flex: none; }
.cb { width: 9px; height: 19px; }
.sep { width: 1px; height: 19px; background: #d8d8d8; }
.g-font .sep { margin: 0 2px; }
.g-font .cb { width: 10px; }
.fmt { font-size: 11px; }
.g-align .sep { margin: 0 3px; }
.wide { width: 38px; gap: 3px; }
.tx { gap: 2px; padding-left: 2px; }
.far { margin-left: 5px; }
.pct { font-size: 13px; width: 21px; }
.mil { font-size: 9px; width: 17px; }
.g-num .sep { margin: 0 2px 0 4px; }
.bigs { justify-content: flex-start; }
.big { flex-direction: column; justify-content: flex-start; padding-top: 2px; line-height: 13px; }
.big svg { margin-bottom: 2px; }
.big span { display: flex; align-items: center; gap: 3px; height: 13px; }
.g-style .bigs { padding-left: 8px; }
.g-style .big { flex: 1; }
.g-style .big:last-child { flex: 0 0 52px; margin-right: 4px; }
.g-cells .bigs { padding: 0 8px 0 4px; }
.g-cells .big { flex: 1; }
.g-edit .stack { padding-left: 10px; flex: 0 0 80px; }
.g-edit .big { flex: 0 1 56px; }
.fold { margin: auto 8px 3px auto; }

/* formula bar */
.fbar { flex: none; height: 36px; display: flex; align-items: center; padding: 0 5px 0 4px; font-family: Lato, sans-serif; font-size: 11px; }
.namebox, .fbtns, .finput { height: 20px; background: #fff; border: 1px solid #cfcfcf; display: flex; align-items: center; }
.namebox { width: 85px; padding: 0 5px 0 4px; }
.namebox input { flex: 1; width: 20px; }
.fbar .dots { margin: 0 11px; }
.fbtns { width: 92px; justify-content: space-around; }
.fx { font: italic 15px/18px "Liberation Serif", serif; }
.fx small { font-size: 11px; padding-top: 4px; }
.finput { flex: 1; margin-left: 2px; padding: 0 3px 0 8px; }
.finput input { flex: 1; }

/* worksheet */
.sheet { flex: 1; min-height: 0; display: flex; overflow: hidden; }
.canvas { position: relative; flex: 1; min-width: 0; overflow: hidden; background: #fff; border-right: 1px solid #b5b5b5; }
.grid { width: 100%; table-layout: fixed; border-collapse: separate; border-spacing: 0; font: 11px/14px Lato, sans-serif; color: #111; }
.c-head { width: 23px; } .c-last { width: 62px; }
.grid th { font: 11px/15px "Open Sans", sans-serif; color: #444; background: #e9e9e9; padding: 0; border-right: 1px solid #b5b5b5; overflow: hidden; }
.grid thead th { height: 16px; border-right-color: #c8c8c8; border-bottom: 1px solid #b0b0b0; background: #e6e6e6; }
.grid tbody th { border-bottom: 1px solid #d5d5d5; }
.grid td { height: 16px; padding: 0 2px; border-right: 1px solid #dcdcdc; border-bottom: 1px solid #dcdcdc; white-space: nowrap; }
.grid td.n { text-align: right; }
.grid .first td { height: 26px; }
.grid .first th { vertical-align: bottom; }
.grid td.big-title { font: bold 17px/24px Lato, sans-serif; color: #0a1058; }
.grid thead .act { background: #d0d0d0; border-bottom-color: #217346; }
.grid tbody .act { background: #d0d0d0; color: #217346; }
.grid thead .corner { background: linear-gradient(135deg, transparent 50%, #b4b4b4 50%) no-repeat 10px 3px / 10px 10px #e6e6e6; }
.grid .cur { outline: 2px solid #217346; outline-offset: -1px; position: relative; }
.grid .cur::after { content: ""; position: absolute; right: -2px; bottom: -2px; width: 3px; height: 3px; background: #217346; outline: 1px solid #fff; }

/* floating equations */
.eq { position: absolute; display: flex; align-items: center; white-space: nowrap; color: #222; font-family: "Liberation Serif", serif; }
.eq small { font-size: 12px; line-height: 12px; }
.frac { display: flex; flex-direction: column; align-items: center; }
.frac > span:first-child { border-bottom: 1px solid #333; align-self: stretch; text-align: center; }
.eq-y { left: 374px; top: 19px; font-size: 18px; line-height: 21px; gap: 5px; background: radial-gradient(closest-side, rgba(0,0,0,.07), transparent); }
.eq-x { left: 547px; top: 20px; font-size: 18px; line-height: 23px; gap: 7px; background: radial-gradient(closest-side, rgba(0,0,0,.07), transparent); }
.eq-lor { left: 708px; top: 32px; font-size: 18px; line-height: 24px; gap: 6px; }
.eq-los { left: 702px; top: 72px; font-size: 19px; line-height: 24px; gap: 10px; }
.eq-q { left: 721px; top: 105px; font-size: 22px; line-height: 29px; gap: 8px; }
.eq-r { left: 934px; top: 24px; font-size: 31px; line-height: 34px; gap: 14px; }
.eq-a { left: 946px; top: 59px; font-size: 29px; line-height: 34px; gap: 14px; }
.eq sub { font: italic bold 17px/10px "Liberation Serif", serif; vertical-align: -4px; }
.chart { position: absolute; left: 855px; top: 104px; }
.lab { font: 9px Lato, sans-serif; fill: #555; }
.end { text-anchor: end; }
.mid { text-anchor: middle; }

/* scroll bars */
.vscroll { width: 16px; padding: 2px 2px 2px 1px; display: flex; flex-direction: column; background: #e6e6e6; }
.sb { width: 13px; height: 13px; background: #fff; border: 1px solid #c4c4c4; flex: none; }
.vthumb { flex: 1; background: #fff; border: 1px solid #bbb; }
.vrest { height: 18px; background: #dcdcdc; }
.tri { border: 3px solid transparent; }
.up { border-bottom: 4px solid #666; border-top: 0; }
.down { border-top: 4px solid #666; border-bottom: 0; }
.left { border-right: 4px solid #555; border-left: 0; }
.right { border-left: 4px solid #555; border-right: 0; }
.tri.go { border-right-color: #0f6a39; }
.tri.off { border-left-color: #bbb; }

/* sheet tabs */
.sheets { flex: none; height: 19px; display: flex; align-items: center; border-top: 1px solid #b8b8b8; border-bottom: 1px solid #c8c8c8; font: 11px/14px "Open Sans", sans-serif; }
.snav { width: 69px; display: flex; align-items: center; padding-left: 18px; gap: 15px; }
.snav span { margin-left: -3px; }
.sheets nav { display: flex; align-self: stretch; }
.sheets nav button { padding: 0 9px 4px; border-left: 1px solid #bbb; }
.sheets nav .on { background: #fff; color: #17693b; font-weight: bold; border-bottom: 2px solid #217346; padding-bottom: 2px; }
.add { margin: 0 13px 0 20px; }
.hscroll { flex: 1; display: flex; margin: 0 16px 0 10px; }
.hthumb { flex: 390; background: #fff; border: 1px solid #bbb; }
.hrest { flex: 71; background: #dadada; }

/* status bar */
.status { flex: none; height: 19px; display: flex; align-items: center; padding: 0 5px; background: #f3f3f3; }
.views { margin-left: auto; display: flex; align-self: stretch; }
.views button { width: 28px; }
.z { margin-left: 4px; }
.status input { appearance: none; width: 84px; height: 11px; margin: 0 0 0 3px; background: linear-gradient(#aaa, #aaa) center / 100% 1px no-repeat; }
.status input::-webkit-slider-thumb { appearance: none; width: 4px; height: 9px; background: #555; }
.pc { margin-left: 8px; font-size: 9px; }

/* taskbar */
.taskbar { flex: none; height: 33px; display: flex; background: linear-gradient(90deg, #0d0b08, #140c0b 15%, #1a170c 26%, #2c250c 32%, #201c14 37%, #2a2618 42%, #3a3112 48%, #352d14 58%, #3a3630 61%, #272315 65%, #3a302a 74%, #262109 82%, #32291c 90%, #241a17); color: #f3f3f3; }
.app { width: 41px; height: 33px; flex: none; }
.open { background: linear-gradient(#76b9ed, #76b9ed) center bottom / 34px 2px no-repeat; }
.current { background: linear-gradient(#76b9ed, #76b9ed) center bottom / 41px 2px no-repeat #4b4a44; }
.tray { margin-left: auto; display: flex; align-items: center; gap: 8px; padding-right: 19px; }
.lang { font-size: 10px; padding: 0 1px 0 3px; }
.clock { display: flex; flex-direction: column; align-items: center; font-size: 10px; line-height: 15px; padding: 0 5px 0 3px; }
.cursor { position: absolute; left: 276px; top: 99px; }
```
